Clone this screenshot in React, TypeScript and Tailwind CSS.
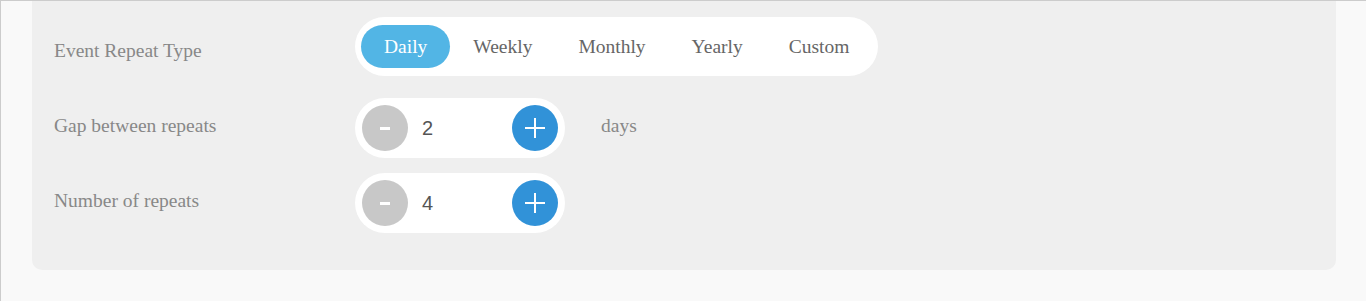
const options = ['Daily', 'Weekly', 'Monthly', 'Yearly', 'Custom'];

const Stepper = ({ value }: { value: number }) => (
  <div className="flex items-center justify-between w-[210px] h-[60px] rounded-full bg-white px-[7px]">
    <button className="flex items-center justify-center w-[46px] h-[46px] rounded-full bg-[#c8c8c8]">
      <span className="block w-[10px] h-[3px] bg-white" />
    </button>
    <span className="flex-grow pl-[14px] text-[20px] text-[#555555] font-['Liberation_Sans',sans-serif]">
      {value}
    </span>
    <button className="flex items-center justify-center w-[46px] h-[46px] rounded-full bg-[#3192d8]">
      <svg width="22" height="22" viewBox="0 0 22 22">
        <path d="M11 1v20M1 11h20" stroke="white" strokeWidth="2" />
      </svg>
    </button>
  </div>
);

export default function App() {
  return (
    <div className="min-h-[301px] bg-[#f9f9f9] border-t border-l border-[#cccccc] font-['Liberation_Serif',serif]">
      <div className="ml-[31px] mr-[30px] rounded-b-[10px] bg-[#efefef] pl-[22px] pt-[16px] pb-[37px]">
        {/* Repeat type */}
        <div className="flex items-start">
          <div className="w-[301px] pt-[23px] text-[19.5px] leading-[22px] text-[#888888]">Event Repeat Type</div>
          <div className="flex items-center h-[59px] rounded-full bg-white px-[6px]">
            {options.map((o) => (
              <button
                key={o}
                className={
                  o === 'Daily'
                    ? 'h-[43px] px-[23px] rounded-full bg-[#52b5e5] text-white text-[19.5px]'
                    : 'h-[43px] px-[23px] rounded-full text-[#666666] text-[19.5px]'
                }
              >
                {o}
              </button>
            ))}
          </div>
        </div>

        {/* Gap */}
        <div className="flex items-start mt-[22px]">
          <div className="w-[301px] pt-[17px] text-[19.5px] leading-[22px] text-[#888888]">Gap between repeats</div>
          <Stepper value={2} />
          <div className="ml-[36px] pt-[17px] text-[19.5px] leading-[22px] text-[#888888]">days</div>
        </div>

        {/* Count */}
        <div className="flex items-start mt-[15px]">
          <div className="w-[301px] pt-[17px] text-[19.5px] leading-[22px] text-[#888888]">Number of repeats</div>
          <Stepper value={4} />
        </div>
      </div>
    </div>
  );
}
